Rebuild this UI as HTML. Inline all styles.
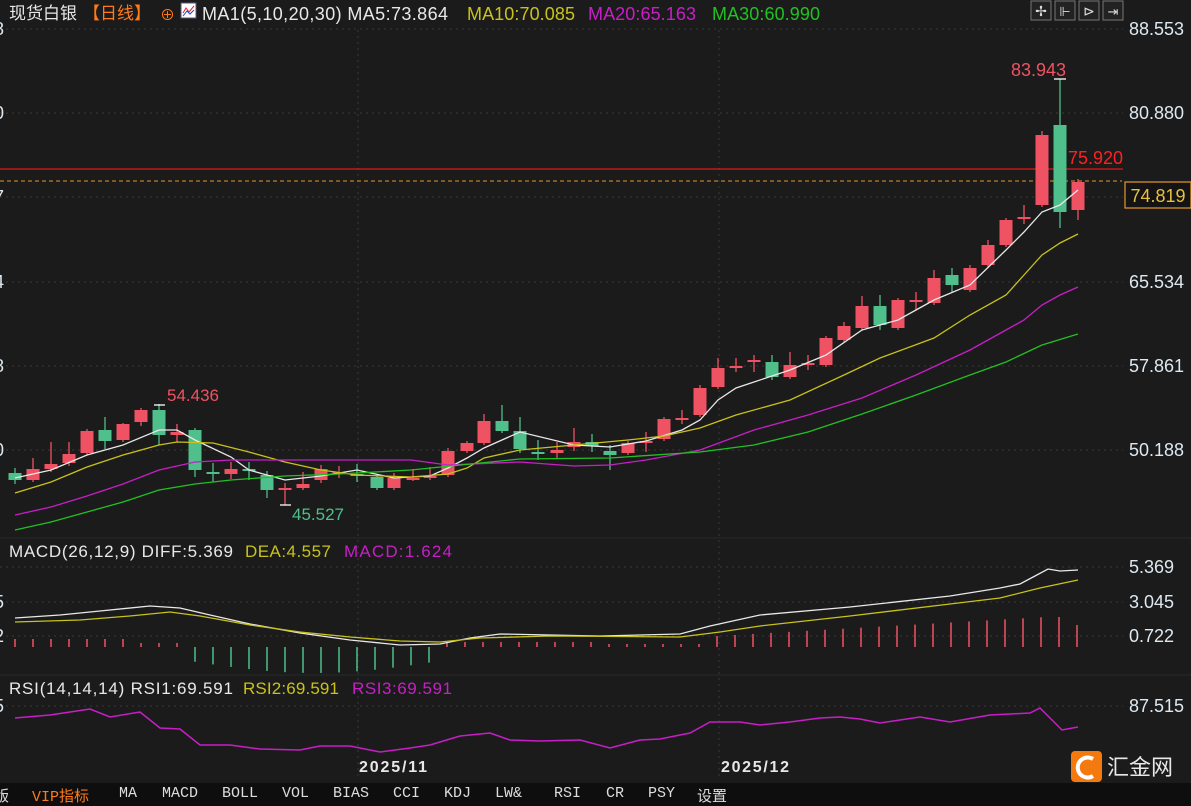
<!DOCTYPE html>
<html><head><meta charset="utf-8"><style>
html,body{margin:0;padding:0;background:#1b1b1b;width:1191px;height:806px;overflow:hidden;font-family:"Liberation Sans","Noto Sans CJK SC",sans-serif}
svg{position:absolute;left:0;top:0}
.bar{position:absolute;left:0;top:783px;width:1191px;height:23px;background:#0e0e0e;font-family:"Liberation Mono","Noto Sans CJK SC",monospace;font-size:15px;color:#ddd}
.bar span{position:absolute;top:2px}
</style></head><body>
<svg width="1191" height="806" id="s" font-family="Liberation Sans, Noto Sans CJK SC, sans-serif"></svg>
<div class="bar">
<span style="left:-6px">版</span>
<span style="left:32px;color:#ff7a1a">VIP指标</span>
<span style="left:119px">MA</span>
<span style="left:162px">MACD</span>
<span style="left:222px">BOLL</span>
<span style="left:282px">VOL</span>
<span style="left:333px">BIAS</span>
<span style="left:393px">CCI</span>
<span style="left:444px">KDJ</span>
<span style="left:495px">LW&amp;</span>
<span style="left:554px">RSI</span>
<span style="left:606px">CR</span>
<span style="left:648px">PSY</span>
<span style="left:697px">设置</span>
</div>
<script>
var s=document.getElementById('s'),h='';
function ln(x1,y1,x2,y2,c,w,d){h+='<line x1="'+x1+'" y1="'+y1+'" x2="'+x2+'" y2="'+y2+'" stroke="'+c+'" stroke-width="'+(w||1)+'"'+(d?' stroke-dasharray="'+d+'"':'')+'/>';}
function tx(x,y,t,c,sz,a,ex){h+='<text x="'+x+'" y="'+y+'" fill="'+c+'" font-size="'+(sz||15)+'"'+(a?' text-anchor="'+a+'"':'')+(ex||'')+'>'+t+'</text>';}
function pl(pts,c,w){var p=[];for(var i=0;i<pts.length;i+=2)p.push(pts[i]+','+pts[i+1]);h+='<polyline points="'+p.join(' ')+'" fill="none" stroke="'+c+'" stroke-width="'+(w||1.3)+'"/>';}
[29,113,197,282,366,450].forEach(function(y){ln(0,y,1123,y,'#3a3a3a',1,'2,4');});
[567,602,636].forEach(function(y){ln(0,y,1123,y,'#3a3a3a',1,'2,4');});
ln(0,706,1123,706,'#3a3a3a',1,'2,4');
ln(358,30,358,780,'#3a3a3a',1,'2,4');ln(719,30,719,780,'#3a3a3a',1,'2,4');
ln(0,538,1191,538,'#2a2a2a');ln(0,675,1191,675,'#2a2a2a');
ln(0,169,1123,169,'#e01818',1.3);
ln(0,181,1122,181,'#e8952a',1,'4,3');
var R='#ef5262',G='#4fbf8b';
var c=[[15,473,480,468,484,'g'],[33,469,480,458,482,'r'],[51,464,469,442,472,'r'],[69,454,463,442,466,'r'],[87,431,453,429,455,'r'],[105,430,441,417,449,'g'],[123,424,440,423,442,'r'],[141,410,422,408,426,'r'],[159,410,435,404,445,'g'],[177,432,435,424,442,'r'],[195,430,470,428,477,'g'],[213,472,473,463,482,'g'],[231,469,474,462,479,'r'],[249,469,470,462,480,'g'],[267,475,490,471,498,'g'],[285,488,489,483,505,'r'],[303,484,488,472,490,'r'],[321,469,480,465,483,'r'],[339,472,473,466,478,'r'],[357,474,475,464,482,'g'],[377,477,488,475,490,'g'],[394,478,488,473,490,'r'],[413,478,479,469,481,'r'],[430,476,477,467,480,'r'],[448,451,475,448,477,'r'],[467,443,451,441,453,'r'],[484,421,443,414,445,'r'],[502,421,431,405,433,'g'],[520,431,449,417,453,'g'],[538,452,453,440,460,'g'],[557,450,453,442,458,'r'],[574,442,447,428,451,'r'],[592,442,446,434,452,'g'],[610,451,455,445,470,'g'],[628,443,453,441,455,'r'],[646,441,442,432,452,'r'],[664,419,439,417,441,'r'],[682,418,419,410,424,'r'],[700,388,415,385,417,'r'],[718,368,387,358,389,'r'],[736,366,368,358,372,'r'],[754,360,362,355,372,'r'],[772,362,377,355,380,'g'],[790,365,377,352,379,'r'],[808,363,365,355,370,'r'],[826,338,365,336,367,'r'],[844,326,340,322,342,'r'],[862,306,328,296,330,'r'],[880,306,325,295,330,'g'],[898,300,328,298,330,'r'],[916,300,302,292,310,'r'],[934,278,303,270,305,'r'],[952,275,285,268,292,'g'],[970,268,290,265,292,'r'],[988,245,265,240,267,'r'],[1006,220,245,218,247,'r'],[1024,217,218,205,224,'r'],[1042,135,205,131,207,'r'],[1060,125,212,79,228,'g'],[1078,182,210,179,220,'r']];
c.forEach(function(k){var col=k[5]=='r'?R:G;ln(k[0],k[3],k[0],k[4],col,1.3);var hgt=Math.max(k[2]-k[1],2);h+='<rect x="'+(k[0]-6.5)+'" y="'+k[1]+'" width="13" height="'+hgt+'" fill="'+col+'"/>';});
ln(154,405,165,405,'#fff',1.3);ln(1054,79,1066,79,'#fff',1.3);ln(280,505,291,505,'#fff',1.3);
pl([15,478,51,470,87,455,123,445,159,430,177,430,195,440,231,457,249,470,285,480,321,476,357,470,394,478,430,476,448,468,467,458,484,448,520,432,574,445,610,447,646,441,682,430,700,420,718,400,736,388,790,370,826,355,862,330,898,320,934,300,970,285,1006,250,1024,232,1042,212,1060,205,1078,190],'#e8e8e8');
pl([15,493,51,482,87,467,123,455,159,445,177,442,213,443,249,452,285,462,321,470,357,475,411,477,448,474,467,468,484,458,520,450,574,445,628,440,664,436,700,428,736,415,790,400,844,375,880,358,934,338,970,315,1006,295,1024,275,1042,255,1060,243,1078,234],'#c8c21a');
pl([15,515,51,507,87,496,123,484,159,470,195,462,231,460,321,460,411,460,448,465,520,462,574,466,610,465,646,460,700,450,754,430,808,415,862,398,916,375,970,350,1006,330,1024,320,1042,305,1060,295,1078,287],'#c81ec8');
pl([15,530,51,522,87,512,123,502,159,490,195,484,231,480,285,476,339,474,411,470,520,459,610,458,700,452,754,445,808,432,862,414,916,395,970,375,1006,362,1042,345,1078,334],'#22c022');
tx(167,401,'54.436',R,17);tx(292,520,'45.527','#4fbf8b',17);tx(1011,76,'83.943',R,18);tx(1068,164,'75.920','#ff2020',18);
[[29,'88.553'],[113,'80.880'],[282,'65.534'],[366,'57.861'],[450,'50.188'],[567,'5.369'],[602,'3.045'],[636,'0.722'],[706,'87.515']].forEach(function(a){tx(1129,a[0]+6,a[1],'#dde8f0',18);});
h+='<rect x="1125" y="182" width="66" height="26" fill="#141414" stroke="#e8952a" stroke-width="1.2"/>';
tx(1158,202,'74.819','#e8c040',18,'middle');
[[29,'8'],[113,'0'],[197,'7'],[282,'4'],[366,'8'],[450,'0'],[602,'5'],[636,'2'],[706,'5']].forEach(function(a){tx(-6,a[0]+6,a[1],'#dde8f0',18);});
tx(9,19,'现货白银','#e8e8e8',17);tx(83,19,'【日线】','#ff7a1a',17);tx(160,20,'⊕','#ff7a1a',15);
h+='<rect x="181" y="3" width="15" height="15" fill="#fff" stroke="#557" /><polyline points="183,13 186,8 189,12 194,6" stroke="#e02020" fill="none"/><polyline points="183,16 187,11 190,14 194,10" stroke="#2040e0" fill="none"/>';
tx(202,20,'MA1(5,10,20,30) MA5:73.864','#e8e8e8',18,null,' textLength="246"');tx(467,20,'MA10:70.085','#c8c21a',18,null,' textLength="108"');tx(588,20,'MA20:65.163','#c81ec8',18,null,' textLength="108"');tx(712,20,'MA30:60.990','#22c022',18,null,' textLength="108"');
for(var i=0;i<4;i++){h+='<rect x="'+(1031+i*24)+'" y="1" width="20" height="19" fill="#222" stroke="#777"/>';}
tx(1041,16,'✢','#ddd',14,'middle');tx(1065,16,'⊩','#ddd',13,'middle');tx(1089,16,'⊳','#ddd',14,'middle');tx(1113,16,'⇥','#ddd',13,'middle');
tx(9,557,'MACD(26,12,9) DIFF:5.369','#e8e8e8',17,null,' textLength="224"');tx(245,557,'DEA:4.557','#c8c21a',17,null,' textLength="86"');tx(344,557,'MACD:1.624','#c81ec8',17,null,' textLength="108"');
var z=647;
for(var x=15;x<=1080;x+=18){var v;
if(x<190){v=-8+(x>140?4:0);}else if(x<440){var t=(x-190)/250;v=14+Math.sin(t*Math.PI)*12;}else if(x<700){v=(x<600?-5:-3);}else{v=-10-(x-700)/380*22;}
if(x>1050)v=(x>1070?-22:-30);
ln(x,z,x,z+v,v<0?R:G,1.5);}
pl([15,618,60,615,100,611,150,606,180,608,210,615,250,624,300,633,350,640,400,645,440,644,470,638,500,634,550,635,600,636,680,634,710,626,760,615,850,607,950,596,1000,588,1020,584,1035,576,1048,569,1060,571,1078,570],'#e8e8e8');
pl([15,622,80,620,130,616,170,612,200,616,250,625,300,632,350,637,400,641,440,642,480,638,550,636,680,637,720,632,760,626,850,616,950,604,1000,598,1040,588,1078,580],'#c8c21a');
tx(9,694,'RSI(14,14,14) RSI1:69.591','#e8e8e8',17,null,' textLength="224"');tx(243,694,'RSI2:69.591','#c8c21a',17,null,' textLength="96"');tx(352,694,'RSI3:69.591','#c81ec8',17,null,' textLength="100"');
pl([15,718,50,715,90,709,110,717,140,712,160,728,180,729,200,745,230,745,260,749,300,750,320,746,350,746,380,752,410,748,430,745,460,736,490,733,510,740,540,741,580,740,610,748,640,740,660,739,690,733,710,722,740,722,760,725,790,722,820,718,840,717,860,719,880,723,920,717,950,722,990,715,1030,713,1040,708,1062,730,1078,727],'#c81ec8',1.5);
tx(359,772,'2025/11','#e8e8e8',16,null,' font-weight="bold" textLength="68"');tx(721,772,'2025/12','#e8e8e8',16,null,' font-weight="bold" textLength="68"');
h+='<rect x="1071" y="751" width="31" height="31" rx="4" fill="#f47a10"/><path d="M1093 759 A10 10 0 1 0 1093 776" stroke="#fff" stroke-width="4" fill="none"/>';
tx(1107,775,'汇金网','#e8e8e8',22);tx(1108,789,'www.gold678.com','#bbb',6);
s.innerHTML=h;
</script>
</body></html>
